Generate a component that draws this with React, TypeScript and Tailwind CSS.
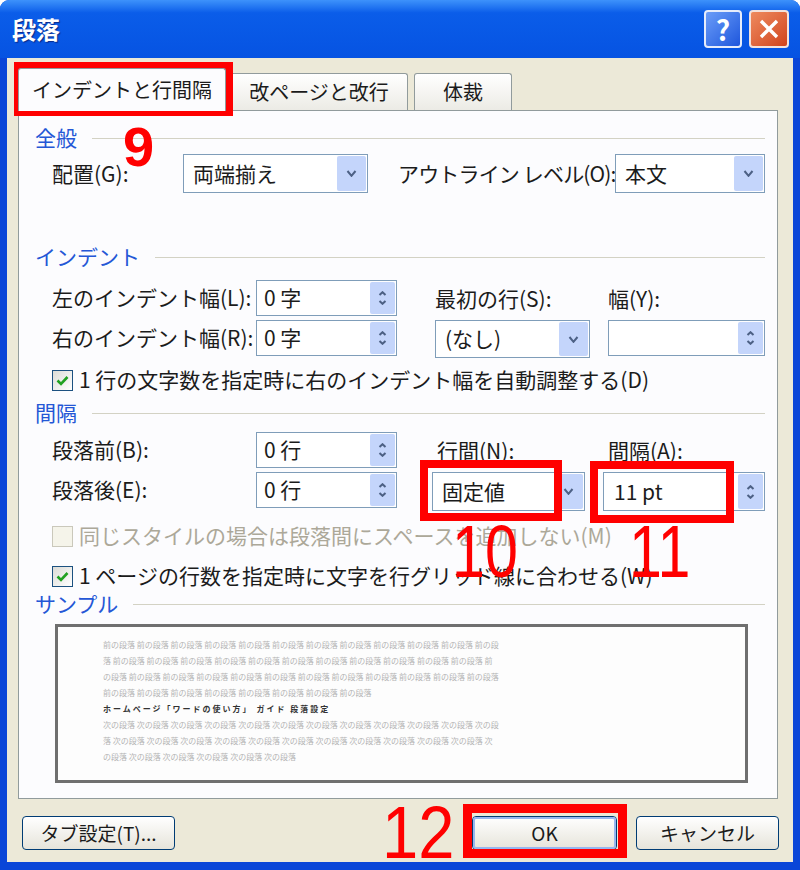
import React from "react";

const FONT = "font-['Noto_Sans_CJK_JP','Noto_Sans',sans-serif]";

function Chevron({ up = false, small = false }: { up?: boolean; small?: boolean }) {
  const w = small ? 9 : 11;
  const h = small ? 5 : 7;
  return (
    <svg width={w} height={h} viewBox={`0 0 ${w} ${h}`}>
      {up ? (
        <path d={`M1.5 ${h - 1} L${w / 2} 1.2 L${w - 1.5} ${h - 1}`} fill="none" stroke="#4d6185" strokeWidth="2" />
      ) : (
        <path d={`M1.5 1 L${w / 2} ${h - 1.2} L${w - 1.5} 1`} fill="none" stroke="#4d6185" strokeWidth="2" />
      )}
    </svg>
  );
}

function Select({ value, className }: { value: string; className: string }) {
  return (
    <div className={`flex border border-[#7f9db9] bg-white ${className}`}>
      <span className="flex flex-1 items-center pl-[9px] whitespace-nowrap">{value}</span>
      <span className="m-[1px] flex w-[29px] items-center justify-center rounded-[2px] bg-[#c4d5fb]">
        <Chevron />
      </span>
    </div>
  );
}

function Spinner({ value, className }: { value: string; className: string }) {
  return (
    <div className={`flex h-[36px] border border-[#7f9db9] bg-white ${className}`}>
      <span className="flex flex-1 items-center pl-[7px] whitespace-nowrap">{value}</span>
      <span className="m-[1px] flex w-[25px] flex-col items-center justify-center gap-[4px] rounded-[2px] bg-[#c4d5fb]">
        <Chevron up small />
        <Chevron small />
      </span>
    </div>
  );
}

function Checkbox({ checked, disabled }: { checked?: boolean; disabled?: boolean }) {
  return (
    <span
      className={`flex h-[21px] w-[21px] items-center justify-center border ${
        disabled ? "border-[#cac8bb] bg-[#f5f4ea]" : "border-[#1c5180] bg-linear-to-br from-[#dcdcd7] to-white"
      }`}
    >
      {checked ? (
        <svg width="13" height="11" viewBox="0 0 13 11">
          <path d="M1.5 5.5 L5 9 L11.5 2" fill="none" stroke="#21a121" strokeWidth="2.6" />
        </svg>
      ) : null}
    </span>
  );
}

function GroupHeader({ label, className = "" }: { label: string; className?: string }) {
  return (
    <div className={`flex h-[24px] items-center gap-[15px] ${className}`}>
      <span className="text-[#2457d6]">{label}</span>
      <span className="h-px flex-1 bg-[#d3d2c4]" />
    </div>
  );
}

function Button({ label, className = "", def = false }: { label: string; className?: string; def?: boolean }) {
  return (
    <div
      className={`flex h-[34px] items-center justify-center rounded-[4px] border border-[#003c74] bg-linear-to-b from-white to-[#e6e4da] text-[19px] ${className}`}
    >
      <span
        className={`flex h-full w-full items-center justify-center rounded-[3px] ${
          def ? "border-2 border-[#97b6f0]" : ""
        }`}
      >
        {label}
      </span>
    </div>
  );
}

const prev = Array.from({ length: 43 }, () => "前の段落").join(" ");
const next = Array.from({ length: 29 }, () => "次の段落").join(" ");

export default function App() {
  return (
    <div className={`relative flex h-[870px] w-[800px] flex-col overflow-hidden rounded-t-[9px] bg-[#0a46d8] text-[21px] text-[#1b1b1b] ${FONT}`}>
      {/* title bar */}
      <div className="flex h-[58px] items-center bg-linear-to-b from-[#3d92fb] via-[#0b5de9] via-[22%] to-[#0653e2] pr-[11px] pl-[12px]">
        <span className="flex-1 text-[24px] font-bold text-white [text-shadow:1px_1px_1px_#0a2b8a]">段落</span>
        <span className="flex h-[38px] w-[38px] items-center justify-center rounded-[4px] border-2 border-[#e6ecfb] bg-linear-to-br from-[#6b9cf8] to-[#1e55dc] text-[28px] font-bold text-white">
          ?
        </span>
        <span className="ml-[7px] flex h-[38px] w-[40px] items-center justify-center rounded-[4px] border-2 border-[#f3e2dc] bg-linear-to-br from-[#ee8a5e] to-[#d0421a]">
          <svg width="22" height="22" viewBox="0 0 22 22">
            <path d="M3 3 L19 19 M19 3 L3 19" stroke="white" strokeWidth="3.4" />
          </svg>
        </span>
      </div>

      {/* body */}
      <div className="mx-[7px] mb-[8px] flex flex-1 flex-col bg-[#ece9d8] pt-[10px]">
        {/* tabs */}
        <div className="flex h-[42px] items-end pl-[11px] text-[20px]">
          <div className="relative z-10 -mb-px flex h-[43px] w-[208px] items-center justify-center rounded-t-[3px] border border-b-0 border-[#919b9c] bg-[#fcfcfe]">
            インデントと行間隔
          </div>
          <div className="ml-[4px] flex h-[37px] w-[178px] items-center justify-center rounded-t-[3px] border border-b-0 border-[#919b9c] bg-linear-to-b from-white to-[#ecebe5]">
            改ページと改行
          </div>
          <div className="ml-[6px] flex h-[37px] w-[98px] items-center justify-center rounded-t-[3px] border border-b-0 border-[#919b9c] bg-linear-to-b from-white to-[#ecebe5]">
            体裁
          </div>
        </div>

        {/* panel */}
        <div className="mr-[15px] ml-[11px] flex flex-col border border-[#919b9c] bg-[#fcfcfe] pt-[15px] pr-[12px] pb-[15px] pl-[16px]">
          <GroupHeader label="全般" />
          <div className="mt-[4px] ml-[17px] flex items-center">
            <span className="w-[131px]">配置(G):</span>
            <Select value="両端揃え" className="h-[39px] w-[185px]" />
            <span className="ml-[30px] w-[217px] tracking-[-0.04em] whitespace-nowrap">アウトライン レベル(O):</span>
            <Select value="本文" className="h-[39px] w-[150px]" />
          </div>

          <GroupHeader label="インデント" className="mt-[52px]" />
          <div className="mt-[11px] ml-[17px] flex">
            <div className="flex flex-col gap-[4px]">
              <div className="flex h-[36px] items-center">
                <span className="w-[204px] whitespace-nowrap">左のインデント幅(L):</span>
                <Spinner value="0 字" className="w-[141px]" />
              </div>
              <div className="flex h-[36px] items-center">
                <span className="w-[204px] whitespace-nowrap">右のインデント幅(R):</span>
                <Spinner value="0 字" className="w-[141px]" />
              </div>
            </div>
            <div className="ml-[38px] flex flex-col gap-[4px]">
              <div className="flex h-[36px] items-end pb-[2px]">
                <span className="w-[173px]">最初の行(S):</span>
                <span>幅(Y):</span>
              </div>
              <div className="flex gap-[18px]">
                <Select value="(なし)" className="h-[38px] w-[155px]" />
                <Spinner value="" className="w-[157px]" />
              </div>
            </div>
          </div>

          <div className="mt-[10px] ml-[17px] flex h-[24px] items-center gap-[6px]">
            <Checkbox checked />
            <span className="whitespace-nowrap">1 行の文字数を指定時に右のインデント幅を自動調整する(D)</span>
          </div>

          <GroupHeader label="間隔" className="mt-[9px]" />
          <div className="mt-[7px] ml-[17px] flex">
            <div className="flex flex-col gap-[4px]">
              <div className="flex h-[36px] items-center">
                <span className="w-[204px]">段落前(B):</span>
                <Spinner value="0 行" className="w-[141px]" />
              </div>
              <div className="flex h-[36px] items-center">
                <span className="w-[204px]">段落後(E):</span>
                <Spinner value="0 行" className="w-[141px]" />
              </div>
            </div>
            <div className="ml-[35px] flex flex-col gap-[4px]">
              <div className="flex h-[36px] items-end pb-[2px]">
                <span className="w-[176px] pl-[5px]">行間(N):</span>
                <span>間隔(A):</span>
              </div>
              <div className="flex gap-[18px]">
                <Select value="固定値" className="h-[39px] w-[153px]" />
                <div className="flex h-[39px] w-[162px] border border-[#7f9db9] bg-white">
                  <span className="flex flex-1 items-center pl-[10px]">11 pt</span>
                  <span className="m-[1px] flex w-[25px] flex-col items-center justify-center gap-[4px] rounded-[2px] bg-[#c4d5fb]">
                    <Chevron up small />
                    <Chevron small />
                  </span>
                </div>
              </div>
            </div>
          </div>

          <div className="mt-[13px] ml-[17px] flex h-[24px] items-center gap-[6px] text-[#aca899]">
            <Checkbox disabled />
            <span className="whitespace-nowrap">同じスタイルの場合は段落間にスペースを追加しない(M)</span>
          </div>
          <div className="mt-[16px] ml-[17px] flex h-[24px] items-center gap-[6px]">
            <Checkbox checked />
            <span className="whitespace-nowrap">1 ページの行数を指定時に文字を行グリッド線に合わせる(W)</span>
          </div>

          <GroupHeader label="サンプル" className="mt-[4px]" />
          <div className="mt-[8px] ml-[20px] h-[159px] w-[693px] border-[3px] border-[#6f6f6f] bg-[#fdfdfd] pt-[10px] pl-[45px]">
            <div className="w-[396px] text-[8px] leading-[16px] break-all">
              <p className="text-[#b4b4b4]">{prev}</p>
              <p className="font-bold tracking-[2px] text-[#333]">ホームページ「ワードの使い方」 ガイド 段落設定</p>
              <p className="text-[#b4b4b4]">{next}</p>
            </div>
          </div>
        </div>

        {/* buttons */}
        <div className="mt-[17px] flex pr-[14px] pl-[15px]">
          <Button label="タブ設定(T)..." className="w-[153px]" />
          <div className="flex-1" />
          <Button label="OK" className="w-[145px]" def />
          <Button label="キャンセル" className="ml-[19px] w-[143px]" />
        </div>
      </div>

      {/* annotations */}
      <div className="pointer-events-none absolute top-[62px] left-[14px] h-[54px] w-[219px] border-[8px] border-[#ff0000]" />
      <div className="pointer-events-none absolute top-[460px] left-[420px] h-[61px] w-[142px] border-[8px] border-[#ff0000]" />
      <div className="pointer-events-none absolute top-[461px] left-[590px] h-[62px] w-[144px] border-[8px] border-[#ff0000]" />
      <div className="pointer-events-none absolute top-[804px] left-[463px] h-[54px] w-[164px] border-[9px] border-[#ff0000]" />

      <span className="pointer-events-none absolute top-[119px] left-[123px] font-['Liberation_Sans',sans-serif] text-[56px] leading-none font-bold text-[#ff0000]">
        9
      </span>
      <span className="pointer-events-none absolute top-[515px] left-[452px] origin-left scale-x-[0.8] font-['Liberation_Sans',sans-serif] text-[74px] leading-none text-[#ff0000]">
        10
      </span>
      <span className="pointer-events-none absolute top-[515px] left-[629px] origin-left scale-x-[0.8] font-['Liberation_Sans',sans-serif] text-[74px] leading-none text-[#ff0000]">
        11
      </span>
      <span className="pointer-events-none absolute top-[796px] left-[382px] origin-left scale-x-[0.88] font-['Liberation_Sans',sans-serif] text-[74px] leading-none text-[#ff0000]">
        12
      </span>
    </div>
  );
}
